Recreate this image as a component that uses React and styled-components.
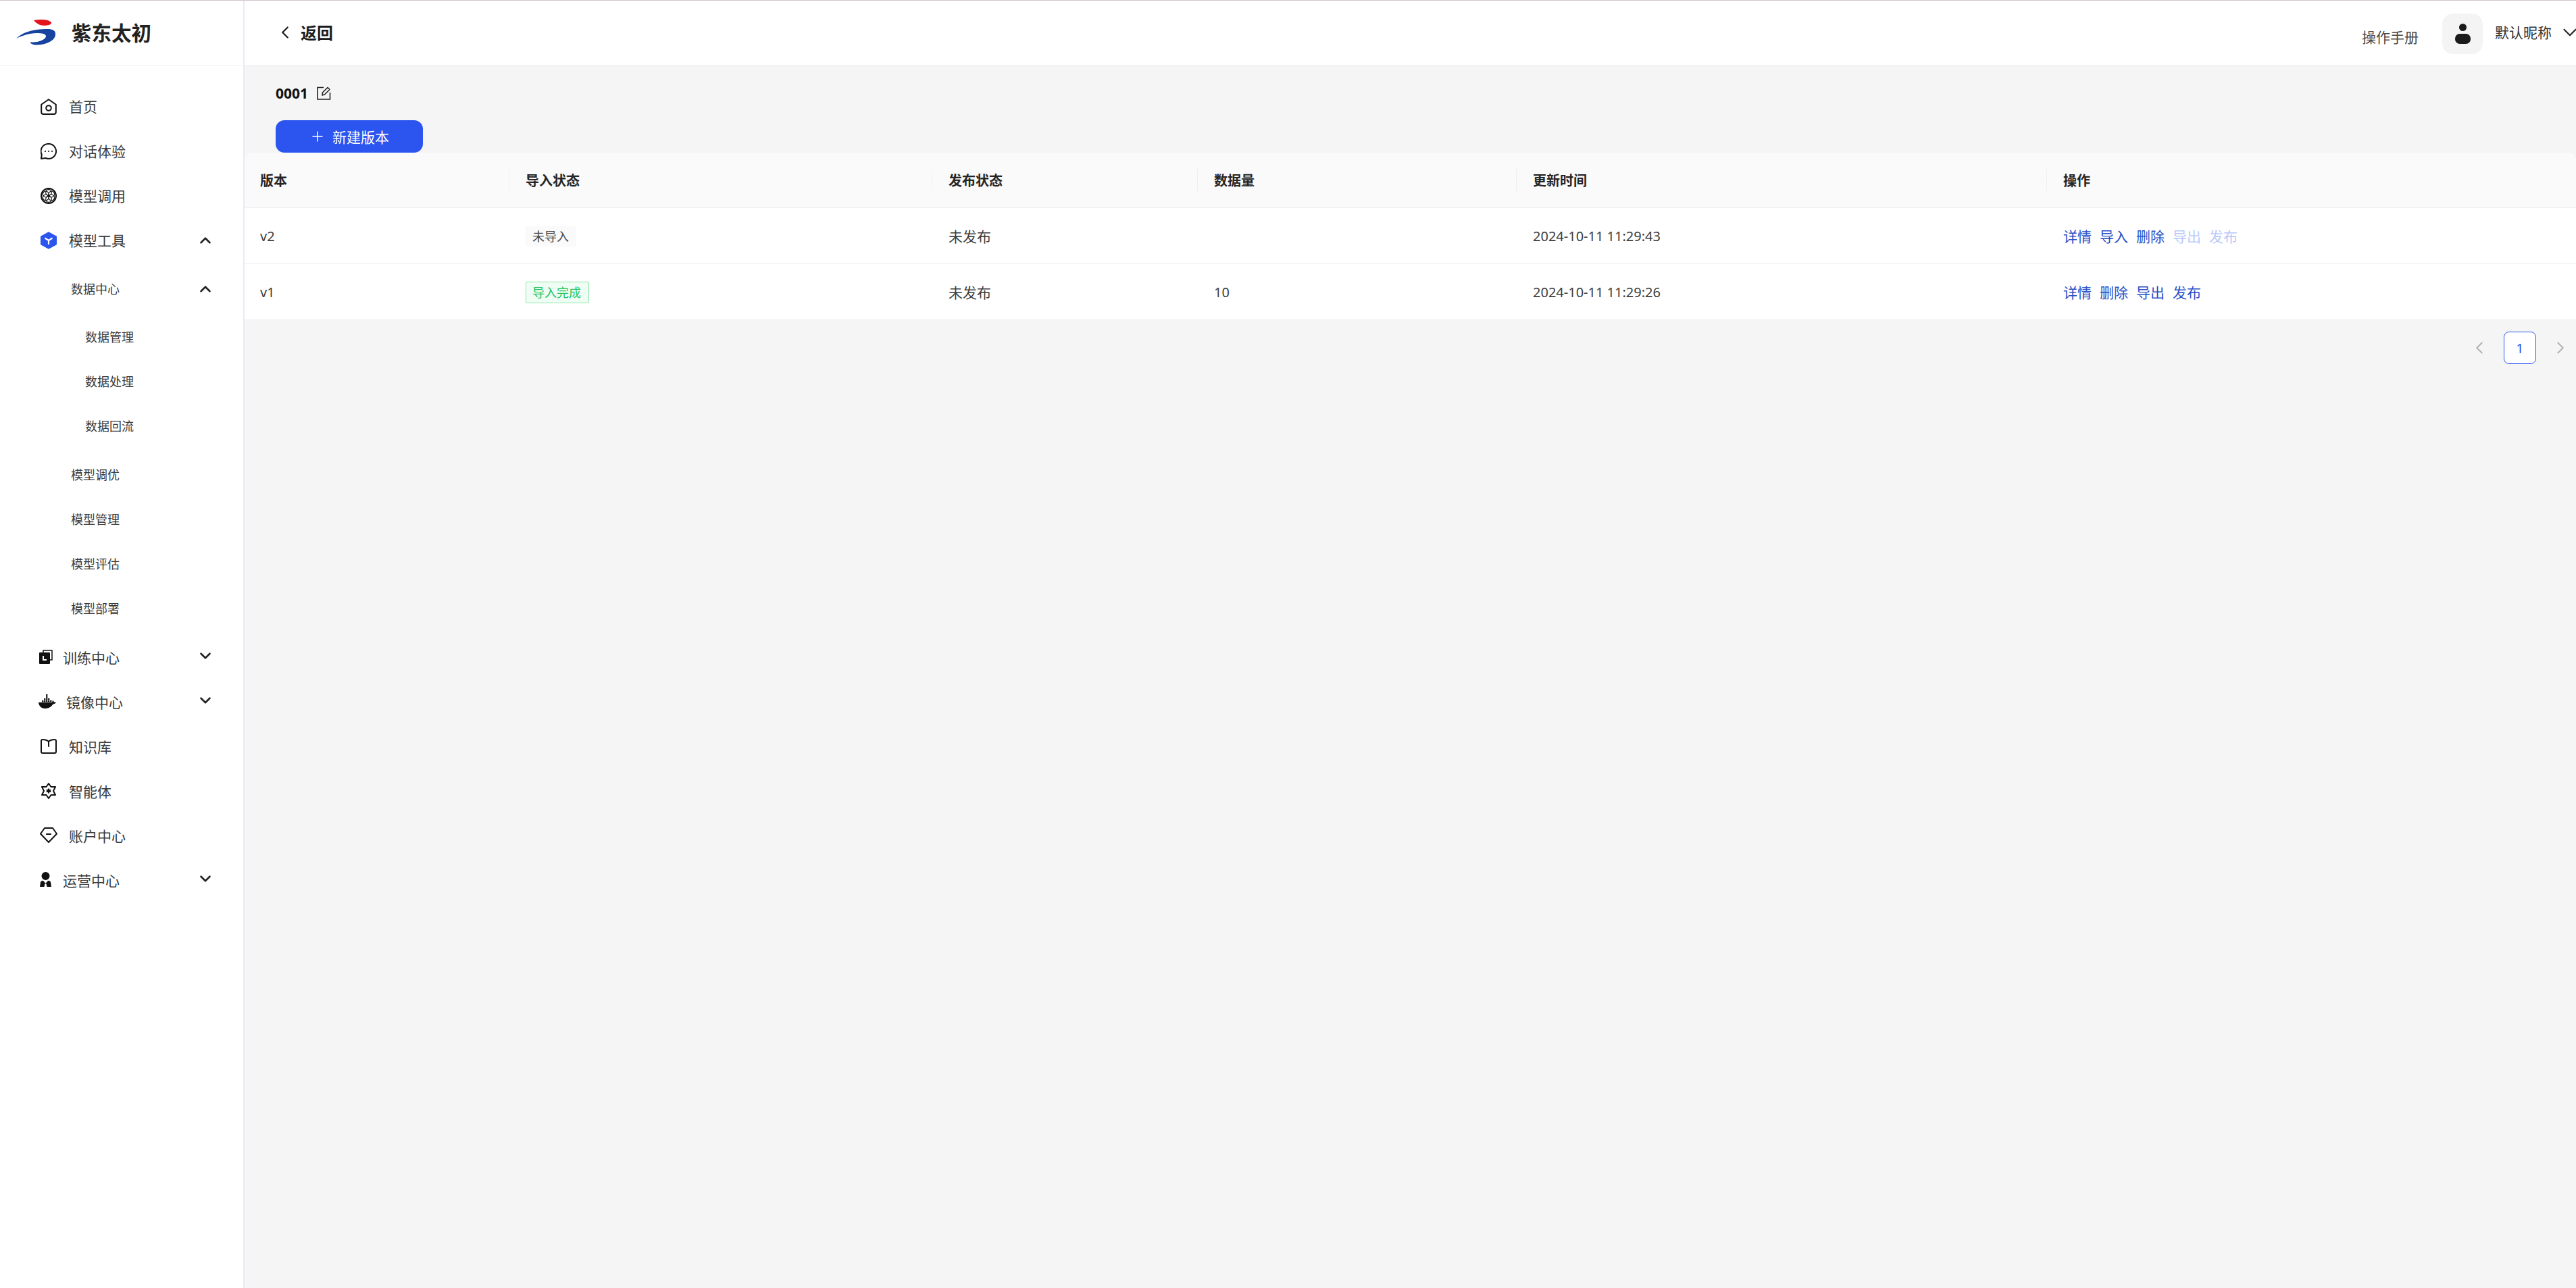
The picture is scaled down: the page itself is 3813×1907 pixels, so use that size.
import React from "react";
import styled, { createGlobalStyle } from "styled-components";
import { ChevronDown, ChevronLeft, ChevronRight, ChevronUp, Plus } from "lucide-react";

const GlobalStyle = createGlobalStyle`
  html, body {
    margin: 0;
    padding: 0;
    background: #fff;
    overflow: hidden;
  }
  * {
    box-sizing: border-box;
  }
  body {
    font-family: "Noto Sans", "Noto Sans CJK SC", sans-serif;
    color: #262626;
  }
`;

const Page = styled.div`
  display: flex;
  width: 3813px;
  height: 1907px;
  border-top: 1px solid #d6c2cb;
`;

const Aside = styled.aside`
  flex: 0 0 362px;
  background: #fff;
  border-right: 2px solid #e9e9f6;
`;

const Brand = styled.div`
  display: flex;
  align-items: center;
  gap: 22px;
  height: 96px;
  padding: 0 0 2px 24px;
  border-bottom: 1px solid #f0f0f0;
  font-size: 29.5px;
  font-weight: 700;
  color: #222;
`;

const Nav = styled.nav`
  padding-top: 28px;
`;

const Item = styled.div`
  position: relative;
  display: flex;
  align-items: center;
  height: 66px;
  padding-left: ${(p) => p.$left || 60}px;
  font-size: 21px;
  color: #3a3a3a;
`;

const IconSlot = styled.span`
  display: flex;
  align-items: center;
  justify-content: center;
  flex: 0 0 auto;
  width: ${(p) => p.$w || 24}px;
  margin-right: ${(p) => p.$gap || 18}px;
  padding-bottom: ${(p) => (p.$lift || 0) * 2}px;
  color: #111;
  svg {
    display: block;
  }
`;

const Label = styled.span`
  line-height: 1;
`;

const Caret = styled.span`
  position: absolute;
  right: 43px;
  top: 50%;
  margin-top: ${(p) => p.$shift || -13}px;
  color: #222;
  svg {
    display: block;
  }
`;

const Group = styled.div`
  padding: 6px 0 7px;
`;

const SubGroup = styled.div`
  padding: 5px 0 6px;
`;

const SubItem = styled(Item)`
  font-size: 18px;
  padding-left: ${(p) => (p.$deep ? 126 : 105)}px;
`;

const Main = styled.main`
  flex: 1;
  display: flex;
  flex-direction: column;
  min-width: 0;
  background: #f5f5f5;
`;

const TopBar = styled.header`
  position: relative;
  display: flex;
  align-items: center;
  justify-content: space-between;
  height: 96px;
  background: #fff;
  border-bottom: 1px solid #f0f0f0;
  overflow: hidden;
`;

const Back = styled.div`
  display: flex;
  align-items: center;
  gap: 8px;
  padding: 0 0 2px 45px;
  font-size: 24px;
  font-weight: 700;
  color: #1c1c1c;
`;

const UserArea = styled.div`
  display: flex;
  align-items: flex-start;
  padding-top: 19px;
  height: 100%;
  margin-right: -8px;
`;

const Manual = styled.span`
  margin: 21px 35px 0 0;
  font-size: 21px;
  line-height: 28px;
  color: #4a4a4a;
`;

const Avatar = styled.span`
  display: flex;
  align-items: center;
  justify-content: center;
  width: 60px;
  height: 60px;
  border-radius: 16px;
  background: #f4f4f4;
`;

const NickName = styled.span`
  margin: 14px 10px 0 18px;
  font-size: 21px;
  line-height: 28px;
  color: #333;
`;

const UserCaret = styled.span`
  margin-top: 11px;
  color: #222;
  svg {
    display: block;
  }
`;

const Content = styled.section`
  padding: 25px 0 0;
`;

const TitleRow = styled.div`
  display: flex;
  align-items: center;
  gap: 13px;
  height: 32px;
  margin: 0 0 24px 46px;
  font-size: 21px;
  font-weight: 700;
  color: #111;
`;

const CreateButton = styled.button`
  display: flex;
  align-items: center;
  justify-content: center;
  gap: 10px;
  width: 218px;
  height: 48px;
  margin-left: 46px;
  padding: 0;
  border: 0;
  border-radius: 13px;
  background: #2b55ee;
  color: #fff;
  font-family: inherit;
  font-size: 21px;
`;

const Table = styled.div`
  display: flex;
  flex-direction: column;
  background: #fff;
  border-radius: 12px 12px 0 0;
  overflow: hidden;
`;

const Row = styled.div`
  display: grid;
  grid-template-columns: 391px 626px 393px 472px 785px 1fr;
  align-items: center;
  height: ${(p) => (p.$head ? 82 : 83)}px;
  background: ${(p) => (p.$head ? "#fafafa" : "#fff")};
  border-bottom: 1px solid #efefef;
`;

const HeadCell = styled.div`
  position: relative;
  padding-left: ${(p) => (p.$first ? 23 : 25)}px;
  font-size: 20px;
  font-weight: 700;
  color: #262626;

  ${(p) =>
    !p.$first &&
    `&::before {
      content: "";
      position: absolute;
      left: 0;
      top: 50%;
      width: 1px;
      height: 33px;
      margin-top: -17px;
      background: #efefef;
    }`}
`;

const Cell = styled.div`
  padding-left: ${(p) => (p.$first ? 23 : 25)}px;
  font-size: ${(p) => (p.$cjk ? 21 : 20)}px;
  color: #3d3d3d;
`;

const Tag = styled.span`
  display: block;
  width: ${(p) => (p.$done ? 94 : 75)}px;
  height: ${(p) => (p.$done ? 32 : 30)}px;
  margin-top: 1px;
  padding-left: 9px;
  border: 1px solid ${(p) => (p.$done ? "#8be8a8" : "#fafafa")};
  border-radius: 2px;
  background: ${(p) => (p.$done ? "#f0fdf4" : "#fafafa")};
  color: ${(p) => (p.$done ? "#22c55e" : "#4a4a4a")};
  font-size: 18px;
  line-height: ${(p) => (p.$done ? 30 : 28)}px;
`;

const Actions = styled.div`
  display: flex;
  gap: 12px;
`;

const ActionLink = styled.a`
  font-size: 21px;
  color: ${(p) => (p.$off ? "#b9c8fa" : "#2a50c8")};
`;

const Pager = styled.div`
  display: flex;
  align-items: center;
  justify-content: flex-end;
  gap: 21px;
  padding: 17px 8px 0 0;
  color: #b0b0b0;
  svg {
    display: block;
  }
`;

const PageNum = styled.span`
  display: flex;
  align-items: center;
  justify-content: center;
  width: 48px;
  height: 48px;
  border: 1px solid #2b55ee;
  border-radius: 8px;
  background: #fff;
  color: #2b55ee;
  font-size: 20px;
`;

function Logo() {
  return (
    <svg width="60" height="38" viewBox="0 0 60 38">
      <path fill="#e2141e" d="M26 1C36 -1 50 0 52 4.5C53 8 44 9.5 38 8.5C34 8 29 5 26 1Z" />
      <path
        fill="#15439f"
        d="M0 28C8 20 18 17 30 15C36 14 42 14 46 14C54 14 59 16 58 23C57 32 42 38 28 37.5C24 37 21 35.5 21 33C28 35 43 31 44 25C44.5 21 38 20 30 20C20 20 8 24 0 28Z"
      />
    </svg>
  );
}

const line = { fill: "none", stroke: "currentColor", strokeWidth: 2, strokeLinejoin: "round", strokeLinecap: "round" };

function HomeIcon() {
  return (
    <svg width="24" height="24" viewBox="0 0 24 24" {...line}>
      <path d="M12 1.2L22.8 8.8V20a3 3 0 0 1-3 3H4.2a3 3 0 0 1-3-3V8.8Z" />
      <circle cx="12" cy="14" r="3.8" />
    </svg>
  );
}

function ChatIcon() {
  return (
    <svg width="24" height="24" viewBox="0 0 24 24" {...line}>
      <path d="M12 1a11 11 0 1 1-4.5 21L1 23l.8-6A11 11 0 0 1 12 1Z" />
      <circle cx="7" cy="12" r="1.1" fill="currentColor" stroke="none" />
      <circle cx="12" cy="12" r="1.1" fill="currentColor" stroke="none" />
      <circle cx="17" cy="12" r="1.1" fill="currentColor" stroke="none" />
    </svg>
  );
}

function ModelIcon() {
  return (
    <svg width="24" height="24" viewBox="0 0 24 24" fill="none" stroke="currentColor" strokeWidth="1.2">
      <circle cx="12" cy="12" r="11" strokeWidth="2" />
      {[0, 60, 120, 180, 240, 300].map((a) => (
        <circle key={a} cx="12" cy="7" r="4.3" transform={`rotate(${a} 12 12)`} />
      ))}
    </svg>
  );
}

function ToolIcon() {
  return (
    <svg width="24" height="26" viewBox="0 0 24 26">
      <path fill="#2b55ee" stroke="#2b55ee" strokeWidth="2" strokeLinejoin="round" d="M12 1.5L23 7.5V18.5L12 24.5L1 18.5V7.5Z" />
      <path fill="none" stroke="#fff" strokeWidth="2.2" d="M6.5 9.5L12 13L17.5 9.5M12 13V19" />
    </svg>
  );
}

function TrainIcon() {
  return (
    <svg width="20" height="21" viewBox="0 0 20 21">
      <path fill="none" stroke="currentColor" strokeWidth="1.5" d="M6 4V1H19V15H16" />
      <rect x="0" y="4" width="16" height="17" rx="1" fill="currentColor" />
      <path fill="none" stroke="#fff" strokeWidth="2" d="M6 9V15H11" />
    </svg>
  );
}

function WhaleIcon() {
  const boxes = [
    [5, 9], [8, 9], [11, 9], [14, 9], [17, 9],
    [8, 6], [11, 6], [14, 6],
    [11, 3], [11, 0],
  ];
  return (
    <svg width="26" height="21" viewBox="0 0 26 21" fill="currentColor">
      {boxes.map(([x, y]) => (
        <rect key={`${x}-${y}`} x={x} y={y} width="2.4" height="2.4" />
      ))}
      <path d="M0 12H20C20.5 11 20.8 9.5 21 8.5C22 9.5 22.5 10.5 23 11.5C24 11.3 25 11.5 26 12C25 13.5 23.5 14.5 21.5 14.5C19 19 14 21 9.5 21C4 21 .5 17 0 12Z" />
    </svg>
  );
}

function BookIcon() {
  return (
    <svg width="24" height="22" viewBox="0 0 24 22" {...line}>
      <path d="M1 3C1 1.5 2 1 3 1C7 1 10 2 12 4C14 2 17 1 21 1C22 1 23 1.5 23 3V19C23 20 22 21 21 21H3C2 21 1 20 1 19Z" />
      <path d="M12 4V11" />
    </svg>
  );
}

function AgentIcon() {
  return (
    <svg width="24" height="24" viewBox="0 0 24 24" {...line}>
      <path d="M12 1L15.5 6H22L19 12L22 18H15.5L12 23L8.5 18H2L5 12L2 6H8.5Z" />
      <path fill="currentColor" stroke="none" d="M12 7.5L13.3 10H16L14.6 12L16 14H13.3L12 16.5L10.7 14H8L9.4 12L8 10H10.7Z" />
    </svg>
  );
}

function DiamondIcon() {
  return (
    <svg width="26" height="23" viewBox="0 0 26 23" {...line}>
      <path d="M7 1H19L25 9.5L13 22L1 9.5Z" />
      <path d="M10 10H16" strokeWidth="2.2" />
    </svg>
  );
}

function OpsIcon() {
  return (
    <svg width="17" height="22" viewBox="0 0 17 22">
      <circle cx="8.5" cy="6" r="6" fill="currentColor" />
      <path fill="currentColor" d="M0 22L1 15C1.5 13.5 3 13 5 13L8.5 17L12 13C14 13 15.5 13.5 16 15L17 22H10.5L9.5 17.5H7.5L6.5 22Z" />
    </svg>
  );
}

function EditIcon() {
  return (
    <svg width="21" height="20" viewBox="0 0 21 20" fill="none" stroke="#222" strokeWidth="1.6">
      <path d="M10 1.5H1V19H19.5V9" />
      <path d="M8 13L8.5 9L16 1.5L19 4.5L11.5 12Z" strokeLinejoin="round" />
    </svg>
  );
}

function UserIcon() {
  return (
    <svg width="23" height="30" viewBox="0 0 23 30" fill="#1a1a1a">
      <ellipse cx="11.5" cy="5.5" rx="5.5" ry="5.5" />
      <rect x="0" y="15" width="23" height="15" rx="7" />
    </svg>
  );
}

const subItems = ["数据管理", "数据处理", "数据回流"];
const modelItems = ["模型调优", "模型管理", "模型评估", "模型部署"];

const headers = ["版本", "导入状态", "发布状态", "数据量", "更新时间", "操作"];
const rows = [
  {
    version: "v2",
    tag: "未导入",
    done: false,
    status: "未发布",
    count: "",
    time: "2024-10-11 11:29:43",
    actions: [["详情"], ["导入"], ["删除"], ["导出", true], ["发布", true]],
  },
  {
    version: "v1",
    tag: "导入完成",
    done: true,
    status: "未发布",
    count: "10",
    time: "2024-10-11 11:29:26",
    actions: [["详情"], ["删除"], ["导出"], ["发布"]],
  },
];

function Sidebar() {
  return (
    <Aside>
      <Brand>
        <Logo />
        紫东太初
      </Brand>
      <Nav>
        <Item>
          <IconSlot><HomeIcon /></IconSlot>
          <Label>首页</Label>
        </Item>
        <Item>
          <IconSlot><ChatIcon /></IconSlot>
          <Label>对话体验</Label>
        </Item>
        <Item>
          <IconSlot><ModelIcon /></IconSlot>
          <Label>模型调用</Label>
        </Item>
        <Item>
          <IconSlot><ToolIcon /></IconSlot>
          <Label>模型工具</Label>
          <Caret><ChevronUp size={26} strokeWidth={2.4} /></Caret>
        </Item>
        <Group>
          <SubItem>
            <Label>数据中心</Label>
            <Caret><ChevronUp size={26} strokeWidth={2.4} /></Caret>
          </SubItem>
          <SubGroup>
            {subItems.map((name) => (
              <SubItem $deep key={name}>
                <Label>{name}</Label>
              </SubItem>
            ))}
          </SubGroup>
          {modelItems.map((name) => (
            <SubItem key={name}>
              <Label>{name}</Label>
            </SubItem>
          ))}
        </Group>
        <Item $left={58}>
          <IconSlot $w={20} $gap={15} $lift={2}><TrainIcon /></IconSlot>
          <Label>训练中心</Label>
          <Caret $shift={-16}><ChevronDown size={26} strokeWidth={2.4} /></Caret>
        </Item>
        <Item $left={57}>
          <IconSlot $w={26} $gap={15} $lift={2}><WhaleIcon /></IconSlot>
          <Label>镜像中心</Label>
          <Caret $shift={-16}><ChevronDown size={26} strokeWidth={2.4} /></Caret>
        </Item>
        <Item>
          <IconSlot $lift={1}><BookIcon /></IconSlot>
          <Label>知识库</Label>
        </Item>
        <Item>
          <IconSlot $lift={1}><AgentIcon /></IconSlot>
          <Label>智能体</Label>
        </Item>
        <Item $left={59}>
          <IconSlot $w={26} $gap={17} $lift={2}><DiamondIcon /></IconSlot>
          <Label>账户中心</Label>
        </Item>
        <Item $left={59}>
          <IconSlot $w={17} $gap={17} $lift={2}><OpsIcon /></IconSlot>
          <Label>运营中心</Label>
          <Caret $shift={-16}><ChevronDown size={26} strokeWidth={2.4} /></Caret>
        </Item>
      </Nav>
    </Aside>
  );
}

export default function App() {
  return (
    <>
      <GlobalStyle />
      <Page>
        <Sidebar />
        <Main>
          <TopBar>
            <Back>
              <ChevronLeft size={30} strokeWidth={1.8} />
              返回
            </Back>
            <UserArea>
              <Manual>操作手册</Manual>
              <Avatar><UserIcon /></Avatar>
              <NickName>默认昵称</NickName>
              <UserCaret><ChevronDown size={34} strokeWidth={1.5} /></UserCaret>
            </UserArea>
          </TopBar>
          <Content>
            <TitleRow>
              0001
              <EditIcon />
            </TitleRow>
            <CreateButton>
              <Plus size={24} strokeWidth={1.5} />
              新建版本
            </CreateButton>
            <Table>
              <Row $head>
                {headers.map((h, i) => (
                  <HeadCell $first={i === 0} key={h}>{h}</HeadCell>
                ))}
              </Row>
              {rows.map((r) => (
                <Row key={r.version}>
                  <Cell $first>{r.version}</Cell>
                  <Cell><Tag $done={r.done}>{r.tag}</Tag></Cell>
                  <Cell $cjk>{r.status}</Cell>
                  <Cell>{r.count}</Cell>
                  <Cell>{r.time}</Cell>
                  <Cell>
                    <Actions>
                      {r.actions.map(([name, off]) => (
                        <ActionLink $off={off} key={name}>{name}</ActionLink>
                      ))}
                    </Actions>
                  </Cell>
                </Row>
              ))}
            </Table>
            <Pager>
              <ChevronLeft size={30} strokeWidth={1.5} />
              <PageNum>1</PageNum>
              <ChevronRight size={30} strokeWidth={1.5} />
            </Pager>
          </Content>
        </Main>
      </Page>
    </>
  );
}
